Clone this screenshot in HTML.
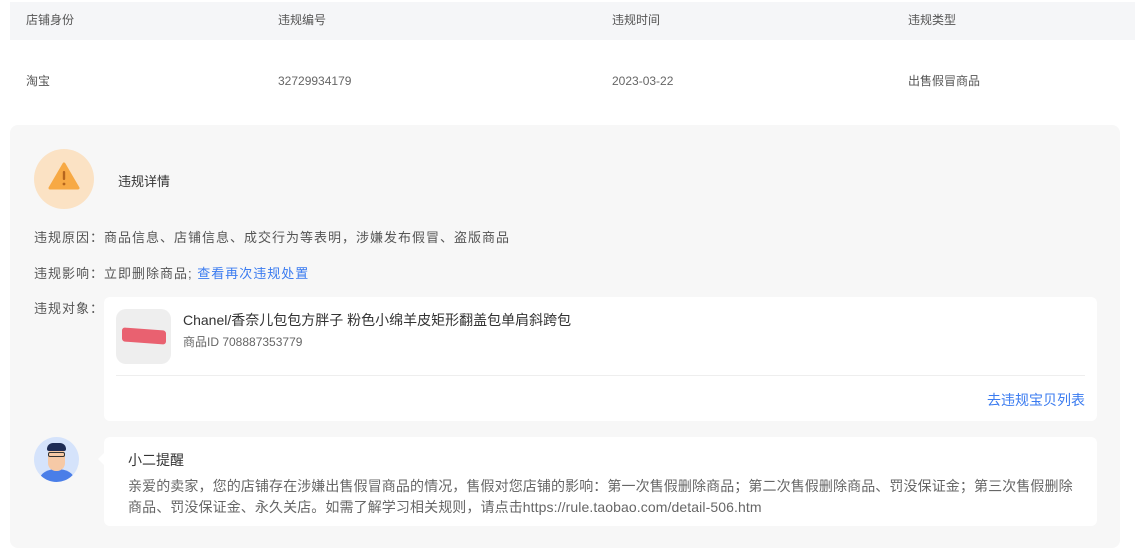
<!DOCTYPE html><html><head><meta charset="utf-8"><style>
body{margin:0;width:1135px;height:549px;background:#fff;font-family:"Liberation Sans","Noto Sans CJK SC",sans-serif;position:relative;overflow:hidden;color:#333}
.a{position:absolute;white-space:nowrap}
.hd{position:absolute;left:10px;top:2px;width:1125px;height:38px;background:#f5f6f8}
.s12{font-size:12px;color:#555;line-height:16px}
.s13{font-size:13px;color:#555}
.ls{letter-spacing:1px}
</style></head><body>
<div class="hd"></div>
<div class="a s12" style="left:26px;top:12px">店铺身份</div>
<div class="a s12" style="left:278px;top:12px">违规编号</div>
<div class="a s12" style="left:612px;top:12px">违规时间</div>
<div class="a s12" style="left:908px;top:12px">违规类型</div>
<div class="a s12" style="left:26px;top:73px">淘宝</div>
<div class="a s12" style="left:278px;top:73px;color:#666">32729934179</div>
<div class="a s12" style="left:612px;top:73px;color:#666">2023-03-22</div>
<div class="a s12" style="left:908px;top:73px">出售假冒商品</div>
<div class="a" style="left:10px;top:125px;width:1110px;height:423px;background:#f7f7f7;border-radius:8px"></div>
<div class="a" style="left:34px;top:149px;width:60px;height:60px;border-radius:50%;background:#fbe2c4"></div>
<svg class="a" style="left:46px;top:160px" width="36" height="32" viewBox="0 0 36 32"><path d="M18 4 L32 28 L4 28 Z" fill="#f7a944" stroke="#f7a944" stroke-width="3" stroke-linejoin="round"/><rect x="16.8" y="11" width="2.4" height="9" rx="1" fill="#b5651d"/><circle cx="18" cy="24" r="1.4" fill="#b5651d"/></svg>
<div class="a s13" style="left:118px;top:171px;color:#333">违规详情</div>
<div class="a s13 ls" style="left:34px;top:227px">违规原因：商品信息、店铺信息、成交行为等表明，涉嫌发布假冒、盗版商品</div>
<div class="a s13 ls" style="left:34px;top:263px">违规影响：立即删除商品; <span style="color:#3a7bf0">查看再次违规处置</span></div>
<div class="a s13 ls" style="left:34px;top:298px">违规对象：</div>
<div class="a" style="left:104px;top:297px;width:993px;height:124px;background:#fff;border-radius:6px"></div>
<div class="a" style="left:116px;top:309px;width:55px;height:55px;border-radius:10px;background:#eee"></div>
<div class="a" style="left:122px;top:329px;width:44px;height:14px;background:#e96170;border-radius:3px;transform:skewY(4deg)"></div>
<div class="a" style="left:183px;top:310px;font-size:14px;color:#333">Chanel/香奈儿包包方胖子 粉色小绵羊皮矩形翻盖包单肩斜跨包</div>
<div class="a s12" style="left:183px;top:334px;color:#666">商品ID 708887353779</div>
<div class="a" style="left:116px;top:375px;width:969px;height:1px;background:#eee"></div>
<div class="a" style="left:987px;top:390px;font-size:14px;color:#3a7bf0">去违规宝贝列表</div>
<div class="a" style="left:34px;top:437px;width:45px;height:45px;border-radius:50%;background:#d5e3fb;overflow:hidden">
<div class="a" style="left:6px;top:32px;width:34px;height:20px;border-radius:50%;background:#4a7ee8"></div>
<div class="a" style="left:14px;top:10px;width:17px;height:24px;border-radius:8px;background:#f6c9a6"></div>
<div class="a" style="left:13px;top:6px;width:19px;height:8px;border-radius:6px 6px 2px 2px;background:#1e2c55"></div>
<div class="a" style="left:14px;top:15px;width:17px;height:5px;border:1px solid #333;border-radius:2px;box-sizing:border-box"></div>
</div>
<div class="a" style="left:92px;top:453px;width:0;height:0;border:6px solid transparent;border-right-color:#fff"></div>
<div class="a" style="left:104px;top:437px;width:993px;height:89px;background:#fff;border-radius:6px"></div>
<div class="a" style="left:128px;top:450px;font-size:14px;color:#333">小二提醒</div>
<div class="a" style="left:128px;top:476px;font-size:14px;color:#666;line-height:21px;white-space:normal;width:950px;letter-spacing:0.1px">亲爱的卖家，您的店铺存在涉嫌出售假冒商品的情况，售假对您店铺的影响：第一次售假删除商品；第二次售假删除商品、罚没保证金；第三次售假删除商品、罚没保证金、永久关店。如需了解学习相关规则，请点击https://rule.taobao.com/detail-506.htm</div>
</body></html>
